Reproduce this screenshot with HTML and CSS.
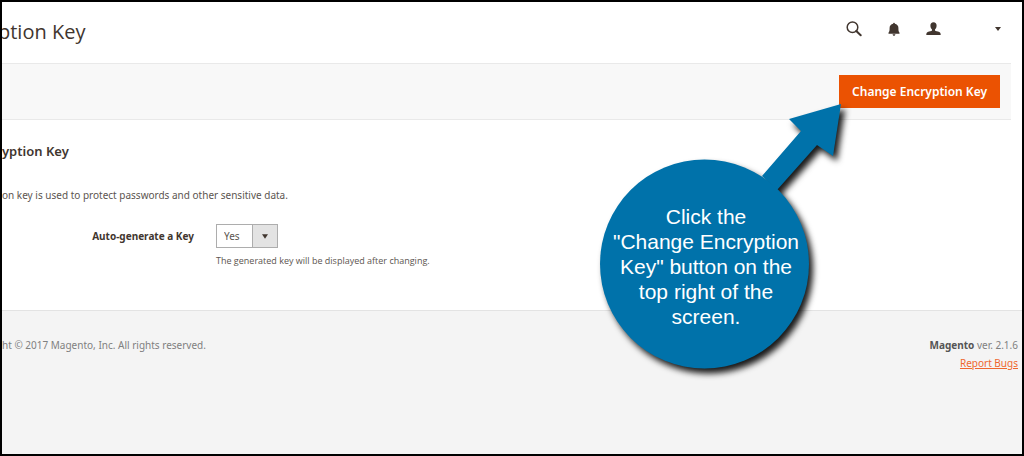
FILE: index.html
```html
<!DOCTYPE html>
<html lang="en">
<head>
<meta charset="utf-8">
<meta name="viewport" content="width=device-width, initial-scale=1">
<title>Encryption Key</title>
<link rel="stylesheet" href="styles.css">
</head>
<body>
<div class="page">
  <header class="header">
    <h1 class="title">ption Key</h1>
    <div class="tools">
      <button class="tool" type="button" aria-label="Search">
        <svg width="16" height="16" viewBox="0 0 16 16" fill="none" stroke="#41362f"><circle cx="6.500" cy="6.300" r="5.300" stroke-width="1.500"/><path d="M10.300 10l4.400 4.200" stroke-width="2" stroke-linecap="round"/></svg>
      </button>
      <button class="tool" type="button" aria-label="Notifications">
        <svg width="12" height="14" viewBox="0 0 12 14" fill="#41362f"><path d="M6 .8c.6 0 .9.400.9.900C9 2.200 10.400 3.600 10.400 5.800c0 2.800.2 3.900 1.100 4.900v1H.5v-1c.9-1 1.100-2.100 1.100-4.900C1.600 3.600 3 2.200 5.100 1.700c0-.5.300-.9.900-.9zM4.600 12.200h2.800c-.2 1-.7 1.500-1.400 1.500s-1.200-.5-1.400-1.500z"/></svg>
      </button>
      <button class="tool account" type="button" aria-label="Account">
        <svg width="15" height="14" viewBox="0 0 15 14" fill="#41362f"><path d="M7.500.2c2 0 3.200 1.300 3.100 3.500-.1 1.800-.7 3-1.600 3.700v1.100c.6.700 2.500.8 4.300 1.600 1 .5 1.400 1.500 1.400 2.900H.3c0-1.400.4-2.400 1.400-2.900C3.500 9.300 5.400 9.200 6 8.500V7.400C5.100 6.700 4.500 5.500 4.400 3.700 4.300 1.500 5.500.2 7.500.2z"/></svg>
        <svg width="6" height="4" viewBox="0 0 6 4" fill="#41362f"><path d="M0 0h6L3 4z"/></svg>
      </button>
    </div>
  </header>

  <div class="actions">
    <button class="primary" type="button">Change Encryption Key</button>
  </div>

  <main class="main">
    <h2 class="section-title">yption Key</h2>
    <p class="intro">on key is used to protect passwords and other sensitive data.</p>
    <div class="field">
      <label class="label" for="auto">Auto-generate a Key</label>
      <div class="control">
        <div class="select-box">
          <select id="auto" class="select"><option>Yes</option><option>No</option></select>
          <span class="select-arrow"><svg width="6" height="5" viewBox="0 0 6 5" fill="#41362f"><path d="M0 .3h6L3 4.800z"/></svg></span>
        </div>
        <p class="note">The generated key will be displayed after changing.</p>
      </div>
    </div>
  </main>

  <footer class="footer">
    <p class="copyright">ht © 2017 Magento, Inc. All rights reserved.</p>
    <div class="version">
      <p><strong class="brand">Magento</strong> ver. 2.1.6</p>
      <a class="report" href="#">Report Bugs</a>
    </div>
  </footer>

  <aside class="callout">
    <svg class="shape" width="250" height="272" viewBox="0 0 250 272" fill="#0072aa"><path d="M241 4L189 19l12 12-39 45 15 14 40-45 16 11z"/><circle cx="104.500" cy="164" r="104.500"/></svg>
    <p class="callout-text">Click the<br>"Change Encryption<br>Key" button on the<br>top right of the<br>screen.</p>
  </aside>
</div>
</body>
</html>
```
FILE: styles.css
```css
* {
  box-sizing: border-box;
}

body,
h1,
h2,
p {
  margin: 0;
}

body {
  font-family: "Noto Sans", "Open Sans", sans-serif;
  font-size: 10px;
  line-height: 18px;
  color: #41362f;
  background: #fff;
}

button {
  font: inherit;
  color: inherit;
  border: 0;
  padding: 0;
  background: none;
}

.page {
  position: relative;
  display: flex;
  flex-direction: column;
  min-height: 100vh;
  overflow: hidden;
  border: 2px solid #000;
}

.header {
  display: flex;
  justify-content: space-between;
  align-items: flex-start;
  padding: 15px 21px 16px 0;
}

.title {
  margin-left: -4px;
  font-family: "Open Sans", "Noto Sans", sans-serif;
  font-size: 20px;
  font-weight: 400;
  line-height: 30px;
}

.tools {
  display: flex;
  align-items: flex-start;
  gap: 26px;
  padding-top: 4px;
}

.tool {
  display: flex;
  align-items: center;
  height: 16px;
}

.account {
  gap: 54px;
}

.actions {
  display: flex;
  justify-content: flex-end;
  margin-right: 11px;
  padding: 11px;
  border: 1px solid #e9e9e9;
  border-width: 1px 0;
  background: #f8f8f8;
}

.primary {
  padding: 0 13px;
  font-size: 12px;
  font-weight: 600;
  line-height: 33px;
  color: #fff;
  background: #eb5202;
}

.main {
  padding: 21px 0 40px;
}

.section-title {
  font-size: 13px;
  font-weight: 600;
  line-height: 20px;
}

.intro {
  margin-top: 25px;
  color: #5c5550;
}

.field {
  display: flex;
  gap: 22px;
  margin-top: 20px;
}

.label {
  width: 192px;
  font-weight: 700;
  line-height: 24px;
  text-align: right;
}

.select-box {
  display: flex;
  width: 62px;
  height: 24px;
  border: 1px solid #adadad;
  background: #fff;
}

.select {
  flex: 1;
  min-width: 0;
  padding: 0 0 0 7px;
  font: inherit;
  color: #5c5550;
  border: 0;
  background: none;
  appearance: none;
}

.select-arrow {
  display: flex;
  align-items: center;
  justify-content: center;
  width: 25px;
  border-left: 1px solid #adadad;
  background: #e3e3e3;
}

.note {
  margin-top: 4px;
  font-family: "Open Sans", "Noto Sans", sans-serif;
  font-size: 9px;
  color: #5c5550;
}

.footer {
  flex: 1;
  display: flex;
  justify-content: space-between;
  padding: 25px 4px 80px 0;
  border-top: 1px solid #e3e3e3;
  color: #808080;
  background: #f4f4f4;
}

.version {
  text-align: right;
}

.brand {
  font-weight: 700;
  color: #555;
}

.report {
  color: #ef672f;
}

.callout {
  position: absolute;
  top: 98px;
  right: 172px;
  width: 250px;
}

.shape {
  display: block;
  overflow: visible;
  filter: drop-shadow(4px 5px 3px rgba(0, 0, 0, 0.9));
}

.callout-text {
  position: absolute;
  top: 104px;
  left: 0;
  width: 212px;
  font-family: "Liberation Sans", Arial, sans-serif;
  font-size: 21px;
  line-height: 25px;
  text-align: center;
  white-space: nowrap;
  color: #fff;
}
```
